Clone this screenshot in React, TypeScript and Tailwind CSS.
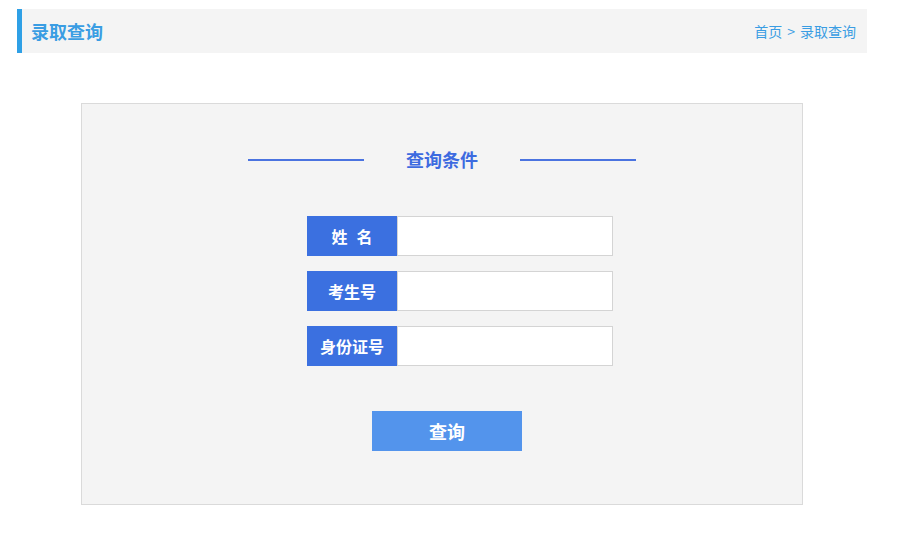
const FONT = '"Noto Sans CJK SC", "Microsoft YaHei", sans-serif';

const fields = [
  { label: ['姓', '名'], name: 'name' },
  { label: ['考生号'], name: 'ksh' },
  { label: ['身份证号'], name: 'sfzh' },
];

function App() {
  return (
    <div className="w-[906px] h-[539px] bg-white pt-[9px]" style={{ fontFamily: FONT }}>
      {/* page header */}
      <div className="ml-[17px] w-[850px] h-[44px] bg-[#f4f4f4] border-l-[5px] border-[#2fa0e6] flex items-center justify-between pl-[9px] pr-[11px]">
        <h2 className="text-[18px] font-bold text-[#3a9de3] leading-none">录取查询</h2>
        <div className="text-[14px] text-[#3a9de3] flex items-center gap-[5px]">
          <span>首页</span>
          <span>&gt;</span>
          <span>录取查询</span>
        </div>
      </div>

      {/* query box */}
      <div className="ml-[81px] mt-[50px] w-[722px] h-[402px] border border-[#dadada] bg-[#f4f4f4] pt-[43px]">
        <div className="flex items-center justify-center gap-[42px]">
          <div className="w-[116px] h-[2px] mt-[2px] bg-[#4a73e0]" />
          <div className="text-[18px] leading-[24px] font-bold text-[#3d6be0]">查询条件</div>
          <div className="w-[116px] h-[2px] mt-[2px] bg-[#4a73e0]" />
        </div>

        <div className="mt-[45px] ml-[225px] flex flex-col gap-[15px]">
          {fields.map((f) => (
            <div key={f.name} className="flex h-[40px]">
              <div className="w-[90px] h-full bg-[#3b70e0] text-white font-bold text-[16px] flex items-center justify-center gap-[9px]">
                {f.label.map((t) => (
                  <span key={t}>{t}</span>
                ))}
              </div>
              <input
                name={f.name}
                className="w-[216px] h-full bg-white border border-[#d4d4d4] outline-none px-2 text-[14px]"
              />
            </div>
          ))}
        </div>

        <button className="mt-[45px] ml-[290px] w-[150px] h-[40px] bg-[#5394ec] text-white font-bold text-[18px] flex items-center justify-center">
          查询
        </button>
      </div>
    </div>
  );
}

export default App;
